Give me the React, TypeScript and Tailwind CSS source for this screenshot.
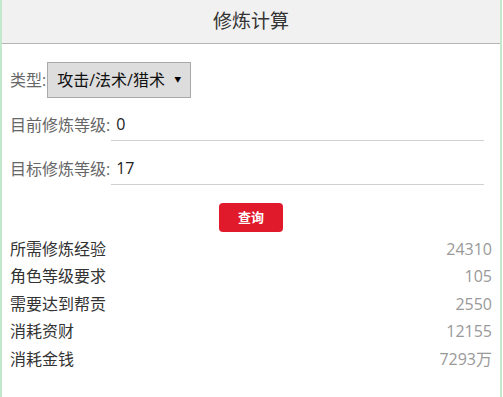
import React from 'react';

const font = { fontFamily: '"Open Sans", "Noto Sans CJK SC", sans-serif' };

const results = [
  { label: '所需修炼经验', value: '24310' },
  { label: '角色等级要求', value: '105' },
  { label: '需要达到帮贡', value: '2550' },
  { label: '消耗资财', value: '12155' },
  { label: '消耗金钱', value: '7293万' },
];

export default function App() {
  return (
    <div className="w-[502px] h-[397px] border-x-2 border-[#c4e8cb] bg-white text-[#333]" style={font}>
      {/* Header */}
      <div className="h-[44px] bg-[#f1f1f1] border-b border-[#b5b5b5] flex items-center justify-center">
        <h1 className="text-[19px] text-[#333] leading-none">修炼计算</h1>
      </div>

      <div className="pl-[8px] pr-[8px]">
        {/* Type select */}
        <div className="flex items-center mt-[18px] h-[36px]">
          <span className="text-[16px] text-[#666]">类型:</span>
          <div className="ml-[1px] w-[144px] h-[36px] bg-[#dddddd] border border-[#a9a9a9] flex items-center pl-[9px] pr-[9px]">
            <span className="text-[16px] text-[#111] flex-1">攻击/法术/猎术</span>
            <span className="text-[7px] text-black">▼</span>
          </div>
        </div>

        {/* Current level */}
        <div className="flex items-end mt-[13px] mr-[8px] h-[30px]">
          <span className="text-[16px] text-[#666] pb-[4px]">目前修炼等级:</span>
          <div className="flex-1 ml-[1px] border-b border-[#d0d0d0] pb-[4px] pl-[5px] text-[16px] text-[#222]">0</div>
        </div>

        {/* Target level */}
        <div className="flex items-end mt-[14px] mr-[8px] h-[30px]">
          <span className="text-[16px] text-[#666] pb-[4px]">目标修炼等级:</span>
          <div className="flex-1 ml-[1px] border-b border-[#d0d0d0] pb-[4px] pl-[5px] text-[16px] text-[#222]">17</div>
        </div>

        {/* Query button */}
        <div className="flex justify-center mt-[18px]">
          <button className="w-[64px] h-[29px] rounded-[4px] bg-[#e0192b] text-white text-[13px] font-bold">查询</button>
        </div>

        {/* Results */}
        <div className="mt-[3px]">
          {results.map((r) => (
            <div key={r.label} className="flex justify-between items-center h-[27.5px]">
              <span className="text-[16px] text-[#333]">{r.label}</span>
              <span className="text-[16px] text-[#999]">{r.value}</span>
            </div>
          ))}
        </div>
      </div>
    </div>
  );
}
